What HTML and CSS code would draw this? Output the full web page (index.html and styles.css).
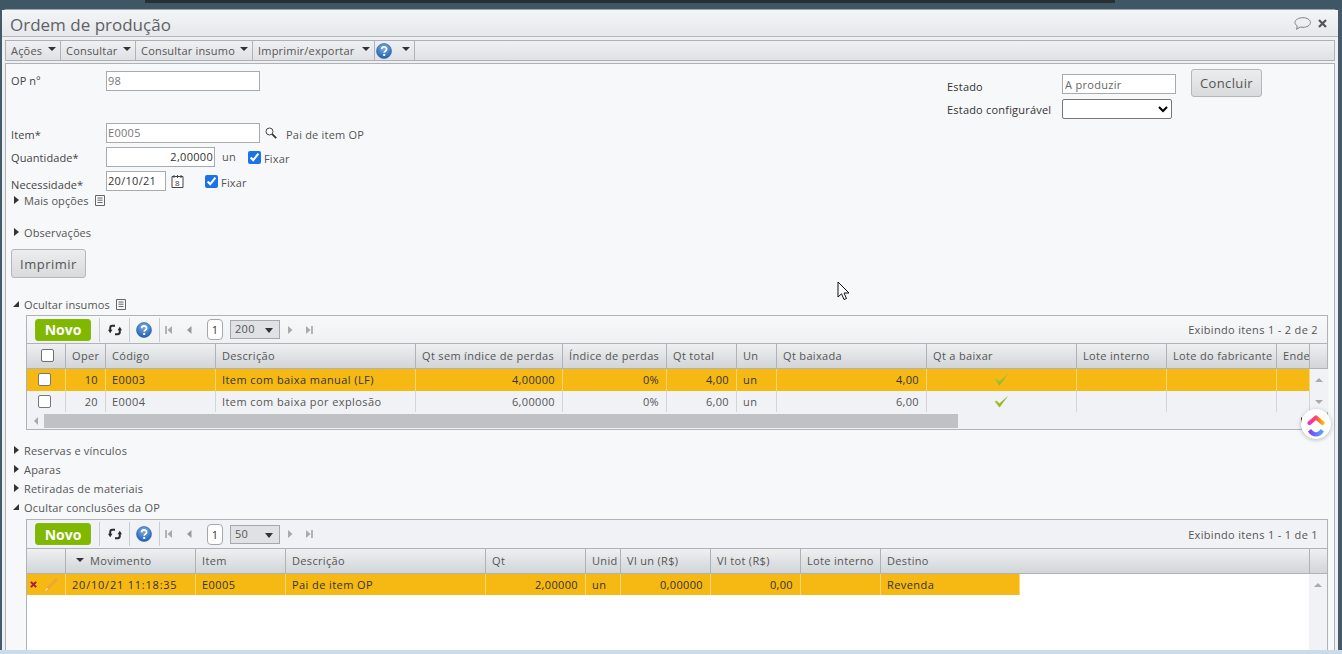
FILE: index.html
```html
<!DOCTYPE html>
<html lang="pt-BR">
<head>
<meta charset="utf-8">
<title>Ordem de produção</title>
<link rel="stylesheet" href="styles.css">
</head>
<body>
<svg width="0" height="0" class="defs">
  <defs>
    <radialGradient id="helpg" cx="50%" cy="30%" r="70%"><stop offset="0" stop-color="#7fb0e6"/><stop offset="1" stop-color="#1f5fb4"/></radialGradient>
    <linearGradient id="cu1" x1="0" x2="1" gradientUnits="objectBoundingBox"><stop offset="0" stop-color="#f02bc0"/><stop offset=".55" stop-color="#ff4d5a"/><stop offset="1" stop-color="#ffb400"/></linearGradient>
    <linearGradient id="cu2" x1="0" x2="1"><stop offset="0" stop-color="#8930fd"/><stop offset="1" stop-color="#49b6f9"/></linearGradient>
    <linearGradient id="chkg" x1="0" x2="1" y1="0" y2="1"><stop offset="0" stop-color="#c3d64a"/><stop offset="1" stop-color="#7fa51a"/></linearGradient>
    <symbol id="help" viewBox="0 0 16 16"><circle cx="8" cy="8" r="7.5" fill="url(#helpg)" stroke="#2a62a8" stroke-width=".6"/><path d="M5.600 6.200c0-3.200 5-3.200 5 0 0 2-2.400 1.800-2.400 3.600" fill="none" stroke="#fff" stroke-width="1.700"/><rect x="7.200" y="11" width="2" height="2" fill="#fff"/></symbol>
    <symbol id="sync" viewBox="0 0 14 12"><path d="M7 1.800H4.200C2.800 1.800 2.200 2.800 2.200 4.200V7" fill="none" stroke="#2b2b2b" stroke-width="2"/><path d="M0 5.800h4.400L2.200 9.200z" fill="#2b2b2b"/><path d="M7 10.200h2.800c1.400 0 2-1 2-2.400V5" fill="none" stroke="#2b2b2b" stroke-width="2"/><path d="M9.600 6.200H14L11.800 2.800z" fill="#2b2b2b"/></symbol>
    <symbol id="note" viewBox="0 0 10 11"><path d="M.5.500h9v10h-9zM2.500 3h5M2.500 5.200h5M2.500 7.500h5" fill="none" stroke="#666"/></symbol>
    <symbol id="check" viewBox="0 0 14 12"><path d="M.5 6 2.500 5 5 7.600 13.500.5 5.200 11.500z" fill="url(#chkg)"/></symbol>
    <symbol id="first" viewBox="0 0 8 10"><path d="M1 1v8" stroke="#999" stroke-width="1.400"/><path d="M7 1v8L2.500 5z" fill="#aaa"/></symbol>
    <symbol id="prev" viewBox="0 0 8 10"><path d="M6.500 1v8L2 5z" fill="#999"/></symbol>
    <symbol id="next" viewBox="0 0 8 10"><path d="M2 1v8l4.500-4z" fill="#aaa"/></symbol>
    <symbol id="last" viewBox="0 0 8 10"><path d="M1 1v8l4.500-4z" fill="#aaa"/><path d="M7 1v8" stroke="#999" stroke-width="1.400"/></symbol>
  </defs>
</svg>

<div class="topstrip"><span class="topstrip-dark"></span></div>
<main class="window">
  <header class="titlebar">
    <h1 class="title">Ordem de produção</h1>
    <div class="title-icons">
      <svg class="chat" viewBox="0 0 17 13"><path d="M9 .7C4.800.7 1 2.600 1 5.400c0 1.500.8 2.600 2.200 3.400L2.600 12.300l3.600-2.300c.9.200 1.800.3 2.800.3 4 0 7.400-2 7.400-4.800S13 .7 9 .7z" fill="none" stroke="#7c8288"/></svg>
      <svg class="close" viewBox="0 0 9 9"><path d="M1 1l7 7M8 1 1 8" stroke="#555" stroke-width="2.200"/></svg>
    </div>
  </header>

  <nav class="menubar">
    <div class="menu-item menu-acoes">Ações<i class="caret"></i></div>
    <div class="menu-item menu-consultar">Consultar<i class="caret"></i></div>
    <div class="menu-item menu-insumo">Consultar insumo<i class="caret"></i></div>
    <div class="menu-item menu-imprimir">Imprimir/exportar<i class="caret"></i></div>
    <div class="menu-item menu-help"><svg class="help-ico"><use href="#help"/></svg><i class="caret"></i></div>
  </nav>

  <section class="content">
    <div class="form-top">
      <div class="form-left">
        <div class="frow frow-op"><label class="flabel">OP nº</label><input class="field field-op ro" value="98" readonly></div>
        <div class="frow frow-item"><label class="flabel">Item*</label><input class="field field-op ro" value="E0005" readonly>
          <svg class="search" viewBox="0 0 12 12"><circle cx="4.500" cy="4.500" r="3.500" fill="#fff" stroke="#444"/><path d="M7.200 7.200l4 4" stroke="#333" stroke-width="1.800"/></svg>
          <span class="after-search">Pai de item OP</span></div>
        <div class="frow frow-qty"><label class="flabel">Quantidade*</label><input class="field field-qty" value="2,00000" readonly><span class="unit">un</span><input type="checkbox" class="ck ck-q" checked><span class="fix">Fixar</span></div>
        <div class="frow frow-need"><label class="flabel">Necessidade*</label><input class="field field-date" value="20/10/21" readonly>
          <svg class="cal" viewBox="0 0 13 14"><path d="M1 2.500h11v11H1z" fill="#fff" stroke="#444"/><path d="M3 1v3M6.500 1v3M10 1v3" stroke="#444"/><text x="6.500" y="12" class="cal-t" text-anchor="middle">8</text></svg>
          <input type="checkbox" class="ck ck-n" checked><span class="fix">Fixar</span></div>
      </div>
      <div class="form-right">
        <div class="state-fields">
          <div class="srow"><label class="slabel s1">Estado</label><input class="field field-state ro" value="A produzir" readonly></div>
          <div class="srow srow2"><label class="slabel">Estado configurável</label><select class="sel"><option></option></select></div>
        </div>
        <button class="btn btn-concluir">Concluir</button>
      </div>
    </div>

    <div class="toggle t-mais"><i class="tri-r"></i>Mais opções<svg class="note"><use href="#note"/></svg></div>
    <div class="toggle t-obs"><i class="tri-r"></i>Observações</div>
    <button class="btn btn-print">Imprimir</button>
    <div class="toggle t-ins"><i class="tri-d"></i>Ocultar insumos<svg class="note"><use href="#note"/></svg></div>

    <div class="panel panel-a">
      <div class="ptool">
        <button class="novo">Novo</button>
        <span class="tsep"></span><svg class="sync"><use href="#sync"/></svg>
        <span class="tsep"></span><svg class="help-ico hp"><use href="#help"/></svg>
        <span class="tsep"></span>
        <svg class="pg pg1"><use href="#first"/></svg><svg class="pg pg2"><use href="#prev"/></svg>
        <span class="page">1</span><span class="psize"><span>200</span><i class="caret"></i></span>
        <svg class="pg pg3"><use href="#next"/></svg><svg class="pg pg4"><use href="#last"/></svg>
        <span class="showing">Exibindo itens 1 - 2 de 2</span>
      </div>
      <div class="grid-a ghead">
        <div class="c"><span class="hck"></span></div><div class="c">Oper</div><div class="c">Código</div><div class="c">Descrição</div><div class="c">Qt sem índice de perdas</div><div class="c">Índice de perdas</div><div class="c">Qt total</div><div class="c">Un</div><div class="c">Qt baixada</div><div class="c">Qt a baixar</div><div class="c">Lote interno</div><div class="c">Lote do fabricante</div><div class="c">Ende</div><div class="c"></div>
      </div>
      <div class="grid-a grow sel-row row-first">
        <div class="c cc"><span class="rck"></span></div><div class="c r">10</div><div class="c">E0003</div><div class="c">Item com baixa manual (LF)</div><div class="c r">4,00000</div><div class="c r">0%</div><div class="c r">4,00</div><div class="c">un</div><div class="c r">4,00</div><div class="c cc"><svg class="chk"><use href="#check"/></svg></div><div class="c"></div><div class="c"></div><div class="c"></div><div class="vs"><i class="up"></i></div>
      </div>
      <div class="grid-a grow">
        <div class="c cc"><span class="rck"></span></div><div class="c r">20</div><div class="c">E0004</div><div class="c">Item com baixa por explosão</div><div class="c r">6,00000</div><div class="c r">0%</div><div class="c r">6,00</div><div class="c">un</div><div class="c r">6,00</div><div class="c cc"><svg class="chk"><use href="#check"/></svg></div><div class="c"></div><div class="c"></div><div class="c"></div><div class="vs"><i class="dn"></i></div>
      </div>
      <div class="hscroll"><i class="sl"></i><div class="thumb"></div><i class="sr"></i></div>
    </div>

    <div class="toggle t-res"><i class="tri-r"></i>Reservas e vínculos</div>
    <div class="toggle t-row"><i class="tri-r"></i>Aparas</div>
    <div class="toggle t-row"><i class="tri-r"></i>Retiradas de materiais</div>
    <div class="toggle t-row"><i class="tri-d"></i>Ocultar conclusões da OP</div>

    <div class="panel panel-b">
      <div class="ptool">
        <button class="novo">Novo</button>
        <span class="tsep"></span><svg class="sync"><use href="#sync"/></svg>
        <span class="tsep"></span><svg class="help-ico hp"><use href="#help"/></svg>
        <span class="tsep"></span>
        <svg class="pg pg1"><use href="#first"/></svg><svg class="pg pg2"><use href="#prev"/></svg>
        <span class="page">1</span><span class="psize"><span>50</span><i class="caret"></i></span>
        <svg class="pg pg3"><use href="#next"/></svg><svg class="pg pg4"><use href="#last"/></svg>
        <span class="showing">Exibindo itens 1 - 1 de 1</span>
      </div>
      <div class="grid-b ghead ghead-b">
        <div class="c"></div><div class="c mov"><i class="caret"></i>Movimento</div><div class="c">Item</div><div class="c">Descrição</div><div class="c">Qt</div><div class="c">Unid</div><div class="c">Vl un (R$)</div><div class="c">Vl tot (R$)</div><div class="c">Lote interno</div><div class="c dest">Destino</div><div class="c"></div>
      </div>
      <div class="body-b">
        <div class="grid-b grow sel-row rowb">
          <div class="c acts"><svg class="del" viewBox="0 0 8 8"><path d="M1 1l6 6M7 1 1 7" stroke="#b01840" stroke-width="2.400"/></svg><svg class="pencil" viewBox="0 0 14 14"><path d="M13 1 2.500 11.500" stroke="#e8923a" stroke-width="1.800"/><path d="M13 1 2.500 11.500" stroke="#fbd98a" stroke-width=".5"/><path d="M1 13l2-3 1 1z" fill="#fff"/></svg></div>
          <div class="c date">20/10/21 11:18:35</div><div class="c">E0005</div><div class="c">Pai de item OP</div><div class="c r">2,00000</div><div class="c">un</div><div class="c r">0,00000</div><div class="c r">0,00</div><div class="c"></div><div class="c">Revenda</div>
        </div>
        <div class="vs-b"><i class="up"></i></div>
      </div>
    </div>
  </section>
</main>
<div class="bottomstrip"></div>

<svg class="cursor" viewBox="0 0 13 20"><path d="M1 1v15l3.500-3.200L7 18.500l2.500-1L7 12h5z" fill="#fff" stroke="#111"/></svg>
<div class="clickup">
  <svg viewBox="0 0 30 30"><path d="M8.500 14 15 8.500 21.500 14" fill="none" stroke="url(#cu1)" stroke-width="4.200" stroke-linecap="round" stroke-linejoin="round"/><path d="M7 22.500c2 3.400 4.800 5 8 5s6-1.600 8-5l-3.200-2.400c-1.300 2-2.900 3.200-4.800 3.200s-3.500-1.200-4.800-3.200z" fill="url(#cu2)"/></svg>
</div>
</body>
</html>
```
FILE: styles.css
```css
* { box-sizing: border-box; }
html, body { margin: 0; height: 654px; overflow: hidden; }
body { position: relative; background: #44596a; font: 11px "Open Sans", "Liberation Sans", sans-serif; color: #555; letter-spacing: .2px; }
.defs { position: absolute; }
.topstrip { height: 9px; background: #3f5664; }
.topstrip-dark { display: block; width: 970px; height: 3px; margin-left: 145px; background: #262f38; }
.window { margin: 0 4px 0 2px; height: 641px; background: #eff0f3; border-radius: 5px 5px 0 0; padding: 0 3px; border-top: 1px solid #9aa3aa; display: flex; flex-direction: column; }
.bottomstrip { height: 4px; background: #c9dcec; }

.titlebar { height: 27px; flex: none; margin: 0 -3px; padding: 0 11px 0 8px; display: flex; align-items: center; justify-content: space-between; background: linear-gradient(#f4f5f7, #e6e8eb); border-bottom: 1px solid #b5b8bb; }
.title { margin: 2px 0 0; font: 400 17px "Open Sans", sans-serif; color: #5d6266; letter-spacing: 0; }
.title-icons { display: flex; align-items: center; gap: 7px; padding-top: 1px; }
.chat { width: 17px; height: 13px; }
.close { width: 9px; height: 9px; }

.menubar { height: 21px; flex: none; margin-top: 3px; display: flex; border: 1px solid #aeb1b4; background: linear-gradient(#eff0f2, #dfe1e5); }
.menu-item { display: flex; align-items: center; height: 100%; padding-left: 5px; border-right: 1px solid #b0b3b6; color: #555; position: relative; }
.menu-acoes { width: 55px; }
.menu-consultar { width: 75px; }
.menu-insumo { width: 117px; }
.menu-imprimir { width: 122px; }
.menu-help { width: 40px; padding-left: 1px; }
.caret { position: absolute; right: 4px; top: 6px; width: 0; height: 0; border: 4px solid transparent; border-top: 4px solid #333; border-bottom: 0; }
.help-ico { width: 16px; height: 16px; }

.content { position: relative; flex: none; height: 587px; margin-top: 2px; background: #f7f8fa; border: 1px solid #aeb1b4; border-bottom: 0; padding: 7px 5px 0 5px; overflow: hidden; }
.form-top { height: 121px; display: flex; justify-content: space-between; }
.form-left { width: 500px; }
.frow { display: flex; align-items: center; height: 20px; }
.frow-op { margin-bottom: 32px; }
.frow-item { margin-bottom: 4px; }
.frow-qty { margin-bottom: 4px; }
.flabel { width: 95px; flex: none; color: #444; letter-spacing: .1px; }
.frow-op .flabel { padding-bottom: 2px; }
.frow-item .flabel { padding-top: 2px; }
.frow-need .flabel { padding-top: 6px; }
.field { height: 20px; border: 1px solid #a8abae; background: #fff; font: inherit; letter-spacing: .3px; color: #333; padding: 0 1px 2px; outline: 0; }
.ro { color: #777; }
.field-op { width: 154px; }
.field-qty { width: 109px; text-align: right; }
.field-date { width: 60px; }
.search { width: 12px; height: 12px; margin: 0 9px 0 5px; }
.after-search { color: #555; padding-top: 2px; }
.unit { margin: 0 0 2px 7px; }
.ck { width: 13px; height: 13px; margin: 0 3px 0 0; accent-color: #1a73e8; }
.ck-q { margin-left: 12px; }
.ck-n { margin-left: 21px; }
.fix { color: #555; padding-top: 2px; }
.cal { width: 13px; height: 14px; margin-left: 5px; }
.cal-t { font: 8px "Open Sans", sans-serif; fill: #333; }

.form-right { display: flex; align-items: flex-start; width: 315px; margin-right: 67px; margin-top: -2px; }
.state-fields { width: 244px; flex: none; padding-top: 5px; }
.srow { display: flex; align-items: center; height: 20px; }
.srow2 { margin-top: 5px; }
.slabel { width: 115px; flex: none; color: #333; }
.s1 { padding-top: 4px; }
.field-state { width: 114px; color: #666; padding: 0 1px 0 2px; }
.sel { width: 110px; height: 20px; background: #fff; border: 1px solid #777; border-radius: 2px; font: inherit; }
.btn { height: 29px; border: 1px solid #b4b6b9; border-radius: 3px; background: linear-gradient(#eceded, #d9dadc); color: #555; font: 13px "Open Sans", sans-serif; letter-spacing: .5px; padding: 0; }
.btn-concluir { width: 71px; height: 28px; letter-spacing: .35px; }

.toggle { display: flex; align-items: center; height: 14px; color: #555; position: relative; letter-spacing: .1px; }
.tri-r { width: 0; height: 0; border: 4px solid transparent; border-left: 5px solid #333; border-right: 0; margin: 0 5px 0 3px; }
.tri-d { width: 0; height: 0; border-left: 6px solid transparent; border-bottom: 6px solid #333; margin: 0 5px 0 2px; }
.note { width: 10px; height: 11px; margin-left: 6px; }
.t-res, .t-row { letter-spacing: .2px; }
.t-mais { margin-top: 1px; }
.t-obs { margin-top: 18px; }
.btn-print { display: block; width: 75px; margin-top: 10px; }
.t-ins { margin-top: 19px; }
.t-res { margin-top: 13px; }
.t-row { margin-top: 5px; }

.panel { margin: 4px 0 0 15px; width: 1302px; border: 1px solid #b0b3b6; background: #f1f2f5; letter-spacing: .33px; }
.panel-a { height: 115px; }
.panel-a .ptool { height: 27px; }
.panel-b { height: 140px; background: #fff; border-bottom: 0; margin-top: 5px; }
.ptool { height: 28px; display: flex; align-items: center; padding: 0 9px 0 8px; background: linear-gradient(#f7f8f9, #f0f1f3); position: relative; }
.panel-b .ptool { background: #f1f2f5; }
.novo { width: 56px; height: 22px; border: 1px solid #86b818; border-radius: 3px; background: #80b800; color: #fff; font: 700 14px "Open Sans", sans-serif; padding: 0; }
.tsep { width: 1px; height: 24px; background: #c9cbce; }
.novo + .tsep { margin-left: 8px; }
.sync { width: 14px; height: 12px; margin: 0 7px 0 8px; }
.hp { margin: 0 7px 0 6px; }
.pg { width: 8px; height: 10px; }
.pg1 { margin-left: 5px; }
.pg2 { margin-left: 12px; }
.pg3 { margin-left: 6px; }
.pg4 { margin-left: 11px; }
.page { width: 16px; height: 21px; margin-left: 14px; border: 1px solid #a5a8ab; border-radius: 4px; background: #fff; display: flex; align-items: center; justify-content: center; color: #333; }
.psize { position: relative; width: 50px; height: 19px; margin: 0 0 0 7px; border: 1px solid #a5a8ab; background: #dfe1e4; padding-left: 4px; color: #555; line-height: 15px; }
.psize .caret { right: 6px; top: 7px; border-width: 5px 4px 0; border-top-color: #333; border-bottom: 0; }
.showing { margin-left: auto; color: #555; }

.grid-a, .grid-b { display: grid; }
.grid-a { grid-template-columns: 39px 40px 110px 200px 147px 104px 70px 40px 150px 150px 90px 110px 33px 18px; }
.ghead { height: 26px; background: linear-gradient(#eef0f1, #d2d5d9); border-top: 1px solid #b0b3b6; border-bottom: 1px solid #b0b3b6; color: #555; }
.ghead-b { grid-template-columns: 39px 130px 90px 200px 100px 35px 90px 90px 80px 429px 18px; }
.ghead .c { display: flex; align-items: center; padding: 0 6px 2px; border-right: 1px solid #b0b3b6; overflow: hidden; white-space: nowrap; position: relative; }
.ghead .c:last-child { border-right: 0; }
.hck { width: 13px; height: 13px; margin-left: 8px; border: 1px solid #6d7074; border-radius: 2px; background: #fff; }
.grow { height: 21px; color: #555; background: #f1f2f5; letter-spacing: .42px; }
.row-first { height: 22px; }
.row-first .c { padding-bottom: 2px; }
.grow .c { display: flex; align-items: center; padding-left: 6px; padding-right: 6px; border-right: 1px solid #d4d5d8; white-space: nowrap; }
.grow .r { justify-content: flex-end; padding-right: 7px; letter-spacing: .35px; }
.grow .cc { justify-content: center; }
.grow .date { letter-spacing: .78px; }
.sel-row { background: #f6b913; color: #333; }
.sel-row .c { border-right-color: #f9d873; }
.rck { width: 13px; height: 13px; margin-right: 4px; border: 1px solid #777; border-radius: 2px; background: #fff; }
.chk { width: 15px; height: 13px; }
.vs { background: #f1f2f5; display: flex; align-items: center; justify-content: center; }
.up { width: 0; height: 0; border-left: 4px solid transparent; border-right: 4px solid transparent; border-bottom: 4px solid #aaa; }
.dn { width: 0; height: 0; border-left: 4px solid transparent; border-right: 4px solid transparent; border-top: 4px solid #aaa; }
.hscroll { height: 14px; margin-top: 2px; display: flex; align-items: center; }
.sl { width: 0; height: 0; margin: 0 6px 0 7px; border-top: 4px solid transparent; border-bottom: 4px solid transparent; border-right: 4px solid #aaa; }
.thumb { width: 914px; height: 14px; background: #c0c1c3; }
.sr { width: 0; height: 0; margin: 0 22px 0 auto; border-top: 4px solid transparent; border-bottom: 4px solid transparent; border-left: 4px solid #333; }

.body-b { position: relative; height: 90px; background: #fff; }
.rowb { grid-template-columns: 39px 130px 90px 200px 100px 35px 90px 90px 80px 139px; width: 993px; height: 21px; }
.acts.c { padding: 0 0 0 3px; }
.del { width: 7px; height: 7px; }
.pencil { width: 14px; height: 14px; margin-left: 7px; }
.mov .caret { position: static; display: inline-block; margin: 0 6px 0 4px; }
.vs-b { position: absolute; right: 0; top: 0; width: 18px; height: 100%; background: #f1f2f5; display: flex; justify-content: center; padding-top: 9px; }

.cursor { position: absolute; left: 837px; top: 281px; width: 13px; height: 20px; }
.clickup { position: absolute; left: 1301px; top: 409px; width: 30px; height: 30px; border-radius: 50%; background: #fff; box-shadow: 0 1px 4px rgba(0,0,0,.25); }
.clickup svg { display: block; width: 30px; height: 30px; }
```
